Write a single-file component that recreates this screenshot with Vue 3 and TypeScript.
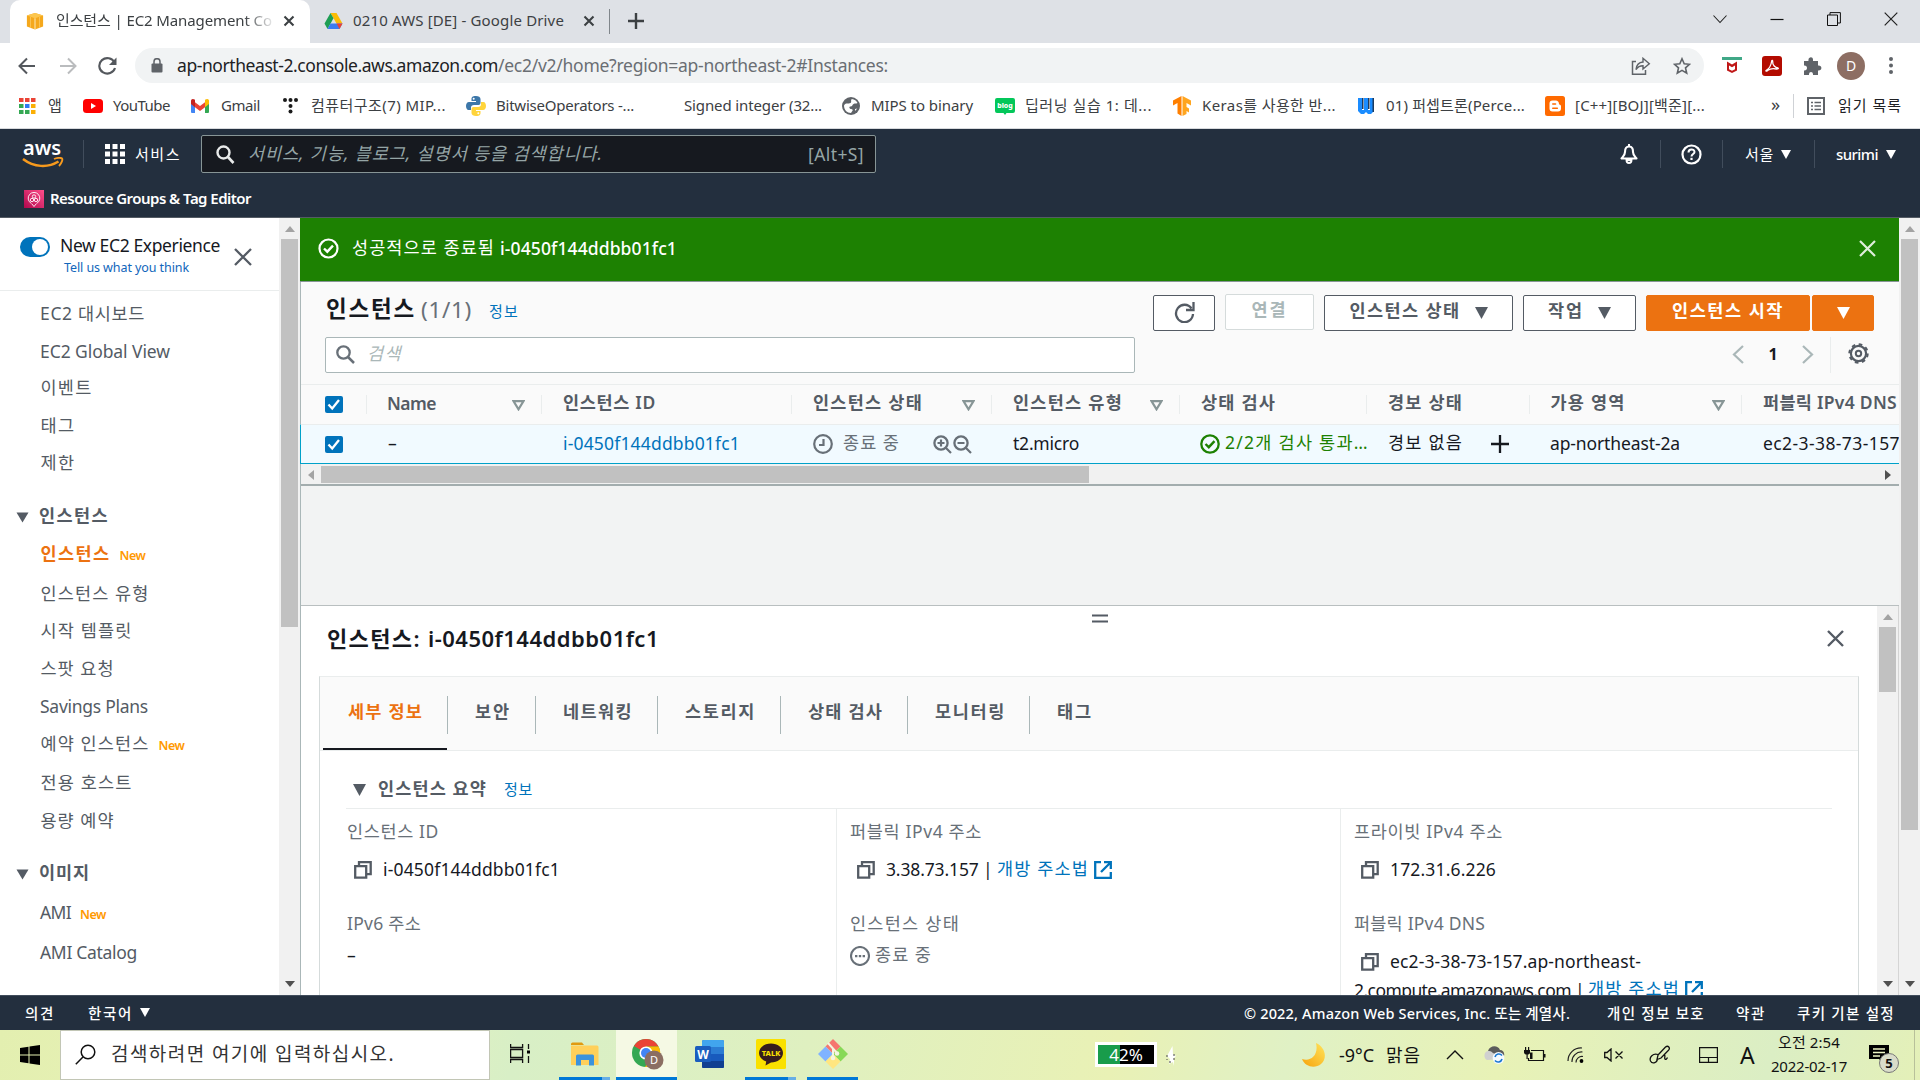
<script setup lang="ts">
import type { Directive } from 'vue'

// Adjusts the tracking of a single-line label so that it fills the given width.
const vFit: Directive<HTMLElement, number> = {
  mounted(el, { value }) {
    const count = (el.textContent ?? '').length
    const natural = el.getBoundingClientRect().width
    if (count > 0) el.style.letterSpacing = `${(value - natural) / count}px`
  },
}

interface Bookmark { icon: string; label: string; fit: number; slot: number }
const bookmarks: Bookmark[] = [
  { icon: 'apps', label: '앱', fit: 14, slot: 64 },
  { icon: 'youtube', label: 'YouTube', fit: 57, slot: 108 },
  { icon: 'gmail', label: 'Gmail', fit: 39, slot: 90 },
  { icon: 'tistory', label: '컴퓨터구조(7) MIP...', fit: 135, slot: 185 },
  { icon: 'python', label: 'BitwiseOperators -...', fit: 138, slot: 188 },
  { icon: 'none', label: 'Signed integer (32...', fit: 138, slot: 187 },
  { icon: 'globe', label: 'MIPS to binary', fit: 102, slot: 154 },
  { icon: 'blog', label: '딥러닝 실습 1: 데...', fit: 127, slot: 177 },
  { icon: 'tf', label: 'Keras를 사용한 반...', fit: 134, slot: 184 },
  { icon: 'wiki', label: '01) 퍼셉트론(Perce...', fit: 139, slot: 189 },
  { icon: 'blogger', label: '[C++][BOJ][백준][...', fit: 130, slot: 226 },
]

interface NavItem { label: string; fit: number; gap: number; kind?: 'head' | 'active'; isNew?: boolean; ko?: boolean }
const navItems: NavItem[] = [
  { label: 'EC2 대시보드', fit: 105, gap: 10 },
  { label: 'EC2 Global View', fit: 130, gap: 14 },
  { label: '이벤트', fit: 52, gap: 12, ko: true },
  { label: '태그', fit: 35, gap: 14, ko: true },
  { label: '제한', fit: 35, gap: 13, ko: true },
  { label: '인스턴스', fit: 70, gap: 29, kind: 'head', ko: true },
  { label: '인스턴스', fit: 70, gap: 14, kind: 'active', isNew: true, ko: true },
  { label: '인스턴스 유형', fit: 109, gap: 16, ko: true },
  { label: '시작 템플릿', fit: 92, gap: 13, ko: true },
  { label: '스팟 요청', fit: 74, gap: 14, ko: true },
  { label: 'Savings Plans', fit: 108, gap: 14 },
  { label: '예약 인스턴스', fit: 109, gap: 13, isNew: true, ko: true },
  { label: '전용 호스트', fit: 92, gap: 15, ko: true },
  { label: '용량 예약', fit: 74, gap: 14, ko: true },
  { label: '이미지', fit: 51, gap: 28, kind: 'head', ko: true },
  { label: 'AMI', fit: 31, gap: 16, isNew: true },
  { label: 'AMI Catalog', fit: 97, gap: 16 },
]

interface Column { label: string; fit: number; sortable: boolean }
const columns: Column[] = [
  { label: 'Name', fit: 49, sortable: true },
  { label: '인스턴스 ID', fit: 93, sortable: false },
  { label: '인스턴스 상태', fit: 110, sortable: true },
  { label: '인스턴스 유형', fit: 110, sortable: true },
  { label: '상태 검사', fit: 75, sortable: false },
  { label: '경보 상태', fit: 75, sortable: false },
  { label: '가용 영역', fit: 75, sortable: true },
  { label: '퍼블릭 IPv4 DNS', fit: 134, sortable: false },
]

const tabs = [
  { label: '세부 정보', fit: 75, slot: 128 },
  { label: '보안', fit: 36, slot: 88 },
  { label: '네트워킹', fit: 70, slot: 122 },
  { label: '스토리지', fit: 71, slot: 123 },
  { label: '상태 검사', fit: 75, slot: 127 },
  { label: '모니터링', fit: 71, slot: 122 },
  { label: '태그', fit: 36, slot: 100 },
]
</script>

<template>
  <div class="screen">
    <header class="tabstrip">
      <div class="tab active">
        <svg width="18" height="18" viewBox="0 0 20 20"><path d="M1 4 10 1l9 3v12l-9 3.500L1 16z" fill="#f5a81c"/><path d="M1 4 10 1l9 3-9 3z" fill="#fcc64e"/><path d="M10 7v12.500" stroke="#fff0cc" stroke-width="1"/><path d="M5 5.500v12.200M15 5.500v12.200" stroke="#fbc55a"/></svg>
        <span class="fade"><span v-fit="225" class="t">인스턴스 | EC2 Management Con</span></span>
        <svg class="x" width="12" height="12" viewBox="0 0 12 12"><path d="M1.500 1.500l9 9m0-9l-9 9" stroke="#3c4043" stroke-width="2.100"/></svg>
      </div>
      <div class="tab second">
        <svg width="19" height="18" viewBox="0 0 19 18"><path d="M6.500 1h6l6 10.500h-6z" fill="#fbbc04"/><path d="M6.500 1 .5 11.500l3 5.500L9.500 6.200z" fill="#1e9e54"/><path d="M3.500 17l3-5.500h12l-3 5.500z" fill="#3b7bf1"/><path d="M15.500 17l-3-5.500h6z" fill="#ea4335"/></svg>
        <span v-fit="211" class="t">0210 AWS [DE] - Google Drive</span>
        <svg class="x" width="12" height="12" viewBox="0 0 12 12"><path d="M1.500 1.500l9 9m0-9l-9 9" stroke="#3c4043" stroke-width="2.100"/></svg>
      </div>
      <i class="tab-sep"></i>
      <svg class="plus" width="16" height="16" viewBox="0 0 16 16"><path d="M8 0v16M0 8h16" stroke="#3c4043" stroke-width="2.400"/></svg>
      <div class="winctl">
        <svg width="14" height="14" viewBox="0 0 14 14"><path d="M.5 3.500 7 10.500l6.500-7" fill="none" stroke="#222" stroke-width="1.100"/></svg>
        <svg width="14" height="14" viewBox="0 0 14 14"><path d="M.5 7.500h13" stroke="#111" stroke-width="1.200"/></svg>
        <svg width="14" height="14" viewBox="0 0 14 14"><path d="M.5 3h10v10.500H.5zM3 3V.6h10.400V11H10.500" fill="none" stroke="#111"/></svg>
        <svg width="14" height="14" viewBox="0 0 14 14"><path d="M.7.700l12.600 12.600m0-12.600L.7 13.300" stroke="#222" stroke-width="1.200"/></svg>
      </div>
    </header>

    <div class="toolbar">
      <svg width="18" height="18" viewBox="0 0 18 18"><path d="M17 9H2M9 1.500 1.500 9 9 16.500" fill="none" stroke="#54585d" stroke-width="2"/></svg>
      <svg width="18" height="18" viewBox="0 0 18 18"><path d="M1 9h15M9 1.500 16.500 9 9 16.500" fill="none" stroke="#babcbe" stroke-width="2"/></svg>
      <svg width="20" height="18" viewBox="0 0 20 18"><path d="M16.500 5.500A8 7.700 0 1 0 17 11" fill="none" stroke="#54585d" stroke-width="2.100"/><path d="M18.500.500v7.500h-7.500z" fill="#54585d"/></svg>
      <div class="omnibox">
        <svg width="12" height="15" viewBox="0 0 12 15"><path d="M1.500 5.500h9q1 0 1 1v7q0 1-1 1h-9q-1 0-1-1v-7q0-1 1-1z" fill="#5f6368"/><path d="M3 6V3.700a3 3 0 0 1 6 0V6" fill="none" stroke="#5f6368" stroke-width="1.500"/></svg>
        <span class="url"><span v-fit="321" class="t dark">ap-northeast-2.console.aws.amazon.com</span><span v-fit="390" class="t">/ec2/v2/home?region=ap-northeast-2#Instances:</span></span>
        <svg width="20" height="18" viewBox="0 0 20 18"><path d="M5 4.500H1.500v12.700h13V13" fill="none" stroke="#5f6368" stroke-width="1.500"/><path d="M5 12.500C5.500 8 8 5.300 12 5V1.300l6.300 5.400L12 12V8.700c-3.200 0-5.300 1.200-7 3.800z" fill="none" stroke="#5f6368" stroke-width="1.400"/></svg>
        <svg width="18" height="18" viewBox="0 0 18 18"><path d="M9 1.800l2.200 5 5.300.5-4 3.600 1.200 5.300L9 13.400l-4.700 2.800 1.200-5.300-4-3.600 5.300-.5z" fill="none" stroke="#5f6368" stroke-width="1.600"/></svg>
      </div>
      <div class="exts">
        <svg width="20" height="20" viewBox="0 0 20 20"><path d="M0 1h20v3H0z" fill="#40a887"/><path d="M5 5.500l5 3 5-3v9L10 17l-5-2.500z" fill="#c01818"/><path d="M7 9.500l3 1.700 3-1.700v3.800l-3 1.500-3-1.500z" fill="#fff"/></svg>
        <svg width="20" height="20" viewBox="0 0 20 20"><rect width="20" height="20" rx="3" fill="#b30b00"/><path d="M4 14.500c3-1.500 5-4.500 5.700-9.500.300-1 1-.600 1 .4-.400 3.600 2.600 6.500 5.300 6.600 1 .500-.3 1.300-1.700 1-3-.800-6-.500-8.800 1.500-.8.900-1.700 1-1.500 0z" fill="none" stroke="#fff" stroke-width="1.300"/></svg>
        <svg width="20" height="20" viewBox="0 0 20 20"><path d="M2 5h4.500C5.700 1 10.800 0 11 3.500V5h5v4.500c4.500-.5 4.500 5.500 0 5V19h-5c.500-4-4.500-4-4 0H2v-4.500c4 .5 4-5.500 0-5z" fill="#5f6368"/></svg>
        <b class="avatar">D</b>
        <svg width="6" height="20" viewBox="0 0 6 20"><g fill="#5f6368"><circle cx="3" cy="3" r="2"/><circle cx="3" cy="9.500" r="2"/><circle cx="3" cy="16" r="2"/></g></svg>
      </div>
    </div>

    <div class="bookmarks">
      <div v-for="b in bookmarks" :key="b.label" class="bm" :style="{ width: b.slot + 'px' }">
        <svg width="20" height="20" viewBox="0 0 20 20">
          <g v-if="b.icon === 'apps'"><path d="M0 2h4.500v4H0zM6 2h4.500v4H6zM12 2h4.500v4H12z" fill="#ea4335"/><path d="M0 8h4.500v4H0zM0 14h4.500v4H0z" fill="#34a853"/><path d="M6 8h4.500v4H6z" fill="#2f7bf0"/><path d="M12 8h4.500v4H12zM12 14h4.500v4H12z" fill="#fbaf05"/><path d="M6 14h4.500v4H6z" fill="#34a853"/></g>
          <g v-else-if="b.icon === 'youtube'"><rect y="3" width="20" height="14" rx="3.500" fill="#f00"/><path d="M8 7l5 3-5 3z" fill="#fff"/></g>
          <g v-else-if="b.icon === 'gmail'"><path d="M0 4.500 4 7v10H1q-1 0-1-1z" fill="#4285f4"/><path d="M18 4.500 14 7v10h3q1 0 1-1z" fill="#34a853"/><path d="M4 6.200l5 3.900 5-3.900v5L9 15l-5-3.800z" fill="#ea4335"/><path d="M0 5c0-2.300 2-2.700 4-1.200v7.400L0 8z" fill="#c5221f"/><path d="M18 5c0-2.300-2-2.700-4-1.200v7.400L18 8z" fill="#fbbc04"/></g>
          <g v-else-if="b.icon === 'tistory'" fill="#1a1a1a"><circle cx="4" cy="4" r="2"/><circle cx="9.500" cy="4" r="2"/><circle cx="15" cy="4" r="2"/><circle cx="9.500" cy="10" r="2"/><circle cx="9.500" cy="15.500" r="2"/></g>
          <g v-else-if="b.icon === 'python'"><path d="M10 0C6 0 5.500 1.500 5.500 3v2H10v1H3C1 6 0 8 0 10s1 4 2.500 4H5v-2.500C5 10 6 9 8 9h4.500q2 0 2-2V3c0-2-2-3-4.500-3z" fill="#3c77a9"/><path d="M10 20c4 0 4.500-1.500 4.500-3v-2H10v-1h7c2 0 3-2 3-4s-1-4-2.500-4H15v2.500c0 1.500-1 2.500-3 2.500H7.500q-2 0-2 2v4c0 2 2 3 4.500 3z" fill="#ffd43b"/><circle cx="7.700" cy="2.800" r="1" fill="#fff"/><circle cx="12.300" cy="17.300" r="1" fill="#fff"/></g>
          <g v-else-if="b.icon === 'globe'"><circle cx="10" cy="10" r="9" fill="#5f6368"/><path d="M3 9.500C4.500 6 9 8.500 10 6.500c.6-1.300-.6-2.200.8-3.600 2.600.2 4.800 1.800 5.700 4.100-1.500 1-2.500 0-4 1s-1 2.500-3 2.500-1 2.500.5 2.500 2.500 1 1 2.500l-1 1.500C6 17 3 14 3 9.500zM14 13l2.300-.5-2.300 2.500z" fill="#fff"/></g>
          <g v-else-if="b.icon === 'blog'"><path d="M2 2h16q2 0 2 2v11q0 2-2 2h-6.500L10 19l-1.500-2H2q-2 0-2-2V4q0-2 2-2z" fill="#03c75a"/><text x="10" y="12" text-anchor="middle" font-family="Noto Sans" font-size="7" font-weight="800" fill="#fff">blog</text></g>
          <g v-else-if="b.icon === 'tf'"><path d="M9.500 0 1 4.500v5L5.500 7v10.500l4 2.500z" fill="#ff7f00"/><path d="M10.500 0 19 4.500v5L14.500 7v4l2.500 1.500v4l-2.500-1.500v3l-4 2z" fill="#ffa51f"/></g>
          <g v-else-if="b.icon === 'wiki'"><path d="M2 2h4v12h2V2h4v12h2V2h3v14l-2 2h-3l-2-2-2 2H5l-3-3z" fill="#1a8cff"/><path d="M6 2h1.500v11H6zM12 2h1.500v11H12zM16.500 2H18v14h-1.500z" fill="#1b3a5f"/></g>
          <g v-else-if="b.icon === 'blogger'"><rect width="20" height="20" rx="2.500" fill="#ff6a00"/><path d="M7.500 4.500h3.200c2 0 3.300 1.500 3.300 3.500 0 1 2 .500 2 2v2.500q0 3-3 3H7.500q-3 0-3-3v-5q0-3 3-3z" fill="#fff"/><path d="M7.800 8h2.700M7.800 12.200h4.500" stroke="#ff6a00" stroke-width="1.600" stroke-linecap="round"/></g>
        </svg>
        <span v-fit="b.fit" class="t">{{ b.label }}</span>
      </div>
      <span class="more">»</span>
      <i class="bm-sep"></i>
      <svg width="18" height="18" viewBox="0 0 18 18"><rect x="1" y="1" width="16" height="16" fill="none" stroke="#5f6368" stroke-width="2"/><path d="M4 5.500h2M4 9h2M4 12.500h2M7.500 5.500H14M7.500 9H14M7.500 12.500H14" stroke="#5f6368" stroke-width="1.600"/></svg>
      <span v-fit="64" class="t list">읽기 목록</span>
    </div>

    <nav class="awsnav">
      <div class="navrow">
        <div class="logo">
          <span v-fit="38" class="t">aws</span>
          <svg width="42" height="12" viewBox="0 0 42 12"><path d="M1 2c11 8.500 25 9 35.500 2.500" fill="none" stroke="#f79a1d" stroke-width="2.500"/><path d="M32 2c3-1.300 7-1.500 8-.500s-.500 5-3 7.500" fill="none" stroke="#f79a1d" stroke-width="1.900"/></svg>
        </div>
        <i class="vline"></i>
        <svg width="20" height="20" viewBox="0 0 20 20" fill="#fff"><path d="M0 0h5v5H0zM7.500 0h5v5h-5zM15 0h5v5h-5zM0 7.500h5v5H0zM7.500 7.500h5v5h-5zM15 7.500h5v5h-5zM0 15h5v5H0zM7.500 15h5v5h-5zM15 15h5v5h-5z"/></svg>
        <span v-fit="46" class="t lbl">서비스</span>
        <div class="search">
          <svg width="19" height="19" viewBox="0 0 19 19"><circle cx="7.500" cy="7.500" r="6" fill="none" stroke="#e8eaea" stroke-width="2.400"/><path d="M12 12l5.500 6" stroke="#e8eaea" stroke-width="2.600"/></svg>
          <em v-fit="355" class="t">서비스, 기능, 블로그, 설명서 등을 검색합니다.</em>
          <span v-fit="56" class="t alt">[Alt+S]</span>
        </div>
        <svg width="20" height="21" viewBox="0 0 20 21"><path d="M10 2.500c-3.500 0-4 3-4 5.500 0 3-1.500 4-3.500 6.500h15C15.500 12 14 11 14 8c0-2.500-.5-5.500-4-5.500z" fill="none" stroke="#fff" stroke-width="2.100" stroke-linejoin="round"/><path d="M7.500 16a2.500 3 0 0 0 5 0z" fill="none" stroke="#fff" stroke-width="1.900"/><path d="M10 0v3" stroke="#fff" stroke-width="2"/></svg>
        <i class="vline"></i>
        <svg width="21" height="21" viewBox="0 0 21 21"><circle cx="10.500" cy="10.500" r="9" fill="none" stroke="#fff" stroke-width="2.200"/><path d="M7.500 8.500c0-4 6-4 6-.5 0 2-3 2-3 4.500" fill="none" stroke="#fff" stroke-width="2"/><path d="M9.400 13.800h2.200V16H9.400z" fill="#fff"/></svg>
        <i class="vline"></i>
        <span v-fit="29" class="t lbl">서울</span>
        <svg width="10" height="9" viewBox="0 0 10 9"><path d="M0 0h10L5 9z" fill="#fff"/></svg>
        <i class="vline"></i>
        <span v-fit="42" class="t user">surimi</span>
        <svg width="10" height="9" viewBox="0 0 10 9"><path d="M0 0h10L5 9z" fill="#fff"/></svg>
      </div>
      <div class="favrow">
        <svg width="20" height="18" viewBox="0 0 20 18"><defs><linearGradient id="rg" x1="0" y1="1" x2="1" y2="0"><stop offset="0" stop-color="#b0084d"/><stop offset="1" stop-color="#ff4f8b"/></linearGradient></defs><rect width="20" height="18" fill="url(#rg)"/><path d="M7 13.200A5.800 5.800 0 1 1 13 13.200" fill="none" stroke="#fff" stroke-width=".9"/><g fill="none" stroke="#fff" stroke-width=".9"><circle cx="10" cy="6.500" r="1.700"/><circle cx="8" cy="10" r="1.700"/><circle cx="12" cy="10" r="1.700"/></g><path d="M7.500 13.500l2.500 3 2.500-3" fill="none" stroke="#fff" stroke-width=".9"/></svg>
        <span v-fit="201" class="t">Resource Groups &amp; Tag Editor</span>
      </div>
    </nav>

    <div class="body">
      <aside class="side">
        <div class="side-head">
          <span class="toggle"><i></i></span>
          <div class="exp">
            <span v-fit="160" class="t">New EC2 Experience</span>
            <a v-fit="125" class="t">Tell us what you think</a>
          </div>
          <svg width="18" height="18" viewBox="0 0 18 18"><path d="M1 1l16 16m0-16L1 17" stroke="#545b64" stroke-width="2.300"/></svg>
        </div>
        <ul class="side-list">
          <li v-for="(n, i) in navItems" :key="i" :class="[n.kind, { ko: n.ko }]" :style="{ marginTop: n.gap + 'px' }">
            <svg v-if="n.kind === 'head'" width="13" height="11" viewBox="0 0 13 11"><path d="M.5.500h12L6.500 10.500z" fill="#545b64"/></svg>
            <span v-fit="n.fit" class="t">{{ n.label }}</span>
            <b v-if="n.isNew" v-fit="26" class="t new">New</b>
          </li>
        </ul>
      </aside>
      <div class="vscroll side-scroll"><i class="up"></i><i class="thumb"></i><i class="down"></i></div>

      <main class="main">
        <div class="flash">
          <svg width="21" height="21" viewBox="0 0 21 21"><circle cx="10.500" cy="10.500" r="9" fill="none" stroke="#fff" stroke-width="2.200"/><path d="M6 10.500l3.300 3.200 5.700-6" fill="none" stroke="#fff" stroke-width="2.400"/></svg>
          <span v-fit="143" class="t ko">성공적으로 종료됨</span>
          <span v-fit="177" class="t med">i-0450f144ddbb01fc1</span>
          <svg class="end" width="17" height="17" viewBox="0 0 17 17"><path d="M1 1l15 15m0-15L1 16" stroke="#dfeedb" stroke-width="2.200"/></svg>
        </div>

        <section class="tablepanel">
          <div class="phead">
            <h1 v-fit="90" class="t">인스턴스</h1>
            <span v-fit="51" class="t count">(1/1)</span>
            <a v-fit="30" class="t info">정보</a>
            <div class="actions">
              <button class="btn refresh"><svg width="21" height="21" viewBox="0 0 21 21"><path d="M17.500 6.500A8.500 8.700 0 1 0 19 12" fill="none" stroke="#545b64" stroke-width="2.300"/><path d="M19.500 0v8h-7.500" fill="none" stroke="#545b64" stroke-width="2.300"/></svg></button>
              <button class="btn off"><span v-fit="36" class="t">연결</span></button>
              <button class="btn state"><span v-fit="111" class="t">인스턴스 상태</span><svg width="13" height="12" viewBox="0 0 13 12"><path d="M0 0h13L6.500 12z" fill="#545b64"/></svg></button>
              <button class="btn act"><span v-fit="36" class="t">작업</span><svg width="13" height="12" viewBox="0 0 13 12"><path d="M0 0h13L6.500 12z" fill="#545b64"/></svg></button>
              <button class="btn go"><span v-fit="112" class="t">인스턴스 시작</span></button>
              <button class="btn drop"><svg width="13" height="12" viewBox="0 0 13 12"><path d="M0 0h13L6.500 12z" fill="#fff"/></svg></button>
            </div>
          </div>
          <div class="filter">
            <div class="fbox">
              <svg width="19" height="19" viewBox="0 0 19 19"><circle cx="7.500" cy="7.500" r="6.200" fill="none" stroke="#687078" stroke-width="2.300"/><path d="M12 12l6 6" stroke="#687078" stroke-width="2.500"/></svg>
              <em v-fit="35" class="t">검색</em>
            </div>
            <div class="pager">
              <svg width="12" height="19" viewBox="0 0 12 19"><path d="M11 1 2 9.500 11 18" fill="none" stroke="#aab7b8" stroke-width="2.200"/></svg>
              <b>1</b>
              <svg width="12" height="19" viewBox="0 0 12 19"><path d="M1 1l9 8.500L1 18" fill="none" stroke="#aab7b8" stroke-width="2.200"/></svg>
            </div>
            <div class="gear"><svg width="21" height="21" viewBox="0 0 21 21"><circle cx="10.500" cy="10.500" r="7.600" fill="none" stroke="#545b64" stroke-width="2.200"/><circle cx="10.500" cy="10.500" r="9.200" fill="none" stroke="#545b64" stroke-width="2" stroke-dasharray="3.600 3.620"/><circle cx="10.500" cy="10.500" r="2.700" fill="none" stroke="#545b64" stroke-width="2"/></svg></div>
          </div>
          <div class="thead grid">
            <span class="check"><svg width="18" height="17" viewBox="0 0 18 17"><rect width="18" height="17" rx="2" fill="#0073bb"/><path d="M3.500 8.500l3.700 4L14 4" fill="none" stroke="#fff" stroke-width="2.300"/></svg></span>
            <div v-for="c in columns" :key="c.label" class="th">
              <b v-fit="c.fit" class="t" :class="{ ko: c.label !== 'Name' }">{{ c.label }}</b>
              <svg v-if="c.sortable" width="13" height="11" viewBox="0 0 13 11"><path d="M1.500 1.200h10L6.500 9.300z" fill="none" stroke="#879596" stroke-width="2.200"/></svg>
            </div>
          </div>
          <div class="trow grid">
            <span class="check"><svg width="18" height="17" viewBox="0 0 18 17"><rect width="18" height="17" rx="2" fill="#0073bb"/><path d="M3.500 8.500l3.700 4L14 4" fill="none" stroke="#fff" stroke-width="2.300"/></svg></span>
            <div class="td"><span class="t">–</span></div>
            <div class="td"><a v-fit="177" class="t">i-0450f144ddbb01fc1</a></div>
            <div class="td gray">
              <svg width="20" height="20" viewBox="0 0 20 20"><circle cx="10" cy="10" r="8.800" fill="none" stroke="#687078" stroke-width="2.200"/><path d="M10.500 5v6H6" fill="none" stroke="#687078" stroke-width="2.200"/></svg>
              <span v-fit="57" class="t ko pend">종료 중</span>
              <svg width="20" height="19" viewBox="0 0 20 19"><circle cx="8" cy="8" r="6.600" fill="none" stroke="#687078" stroke-width="2.300"/><path d="M13 13l5 5M8 4.500v7M4.500 8h7" stroke="#687078" stroke-width="2.200"/></svg>
              <svg width="20" height="19" viewBox="0 0 20 19"><circle cx="8" cy="8" r="6.600" fill="none" stroke="#687078" stroke-width="2.300"/><path d="M13 13l5 5M4.500 8h7" stroke="#687078" stroke-width="2.200"/></svg>
            </div>
            <div class="td"><span v-fit="66" class="t">t2.micro</span></div>
            <div class="td green">
              <svg width="20" height="20" viewBox="0 0 20 20"><circle cx="10" cy="10" r="8.700" fill="none" stroke="#1d8102" stroke-width="2.300"/><path d="M5.500 10l3.300 3.200 5.700-6" fill="none" stroke="#1d8102" stroke-width="2.400"/></svg>
              <span v-fit="144" class="t ko">2/2개 검사 통과…</span>
            </div>
            <div class="td"><span v-fit="75" class="t ko">경보 없음</span><svg class="add" width="18" height="18" viewBox="0 0 18 18"><path d="M9 0v18M0 9h18" stroke="#16191f" stroke-width="2.300"/></svg></div>
            <div class="td zone"><span v-fit="130" class="t">ap-northeast-2a</span></div>
            <div class="td"><span v-fit="137" class="t">ec2-3-38-73-157</span></div>
          </div>
          <div class="hscroll"><i class="left"></i><i class="hthumb"></i><i class="right"></i></div>
        </section>

        <section class="split">
          <div class="split-main">
            <svg class="handle" width="16" height="9" viewBox="0 0 16 9"><path d="M0 1.500h16M0 7.500h16" stroke="#545b64" stroke-width="2.200"/></svg>
            <div class="title">
              <h2><span v-fit="101" class="t">인스턴스: </span><span v-fit="231" class="t">i-0450f144ddbb01fc1</span></h2>
              <svg width="17" height="17" viewBox="0 0 17 17"><path d="M1 1l15 15m0-15L1 16" stroke="#545b64" stroke-width="2.400"/></svg>
            </div>
            <div class="card">
              <div class="tabs">
                <div v-for="(t, i) in tabs" :key="t.label" class="dtab" :class="{ on: i === 0 }" :style="{ width: t.slot + 'px' }">
                  <b v-fit="t.fit" class="t">{{ t.label }}</b>
                </div>
              </div>
              <div class="sum-head">
                <svg width="13" height="12" viewBox="0 0 13 12"><path d="M0 0h13L6.500 12z" fill="#545b64"/></svg>
                <b v-fit="109" class="t">인스턴스 요약</b>
                <a v-fit="29" class="t info">정보</a>
              </div>
              <div class="sum">
                <div class="col">
                  <label v-fit="92" class="t">인스턴스 ID</label>
                  <p class="val"><svg class="copy" viewBox="0 0 18 18"><path d="M1.200 5.200h11v11.500h-11zM5 5V1.200h11.700v12H12.500" fill="none" stroke="#545b64" stroke-width="2.300"/></svg><span v-fit="177" class="t">i-0450f144ddbb01fc1</span></p>
                  <label v-fit="74" class="t">IPv6 주소</label>
                  <p class="val2"><span class="t">–</span></p>
                </div>
                <div class="col">
                  <label v-fit="132" class="t">퍼블릭 IPv4 주소</label>
                  <p class="val"><svg class="copy" viewBox="0 0 18 18"><path d="M1.200 5.200h11v11.500h-11zM5 5V1.200h11.700v12H12.500" fill="none" stroke="#545b64" stroke-width="2.300"/></svg><span v-fit="111" class="t">3.38.73.157 |&nbsp;</span><a v-fit="92" class="t ko">개방 주소법</a><svg class="ext" viewBox="0 0 18 18"><path d="M7 1.200H1.200v15.600h15.600V11M10 1.200h6.800V8M16.500 1.500 7 11" fill="none" stroke="#0073bb" stroke-width="2.300"/></svg></p>
                  <label v-fit="110" class="t">인스턴스 상태</label>
                  <p class="val2 gray"><svg width="20" height="20" viewBox="0 0 20 20"><circle cx="10" cy="10" r="9" fill="none" stroke="#687078" stroke-width="2.100"/><path d="M5 9h2.400v2.200H5zM8.800 9h2.400v2.200H8.800zM12.600 9H15v2.200h-2.400z" fill="#687078"/></svg><span v-fit="57" class="t ko">종료 중</span></p>
                </div>
                <div class="col">
                  <label v-fit="149" class="t">프라이빗 IPv4 주소</label>
                  <p class="val"><svg class="copy" viewBox="0 0 18 18"><path d="M1.200 5.200h11v11.500h-11zM5 5V1.200h11.700v12H12.500" fill="none" stroke="#545b64" stroke-width="2.300"/></svg><span v-fit="106" class="t">172.31.6.226</span></p>
                  <label v-fit="131" class="t">퍼블릭 IPv4 DNS</label>
                  <p class="val dns"><svg class="copy" viewBox="0 0 18 18"><path d="M1.200 5.200h11v11.500h-11zM5 5V1.200h11.700v12H12.500" fill="none" stroke="#545b64" stroke-width="2.300"/></svg><span v-fit="251" class="t">ec2-3-38-73-157.ap-northeast-</span></p>
                  <p class="cont"><span v-fit="234" class="t">2.compute.amazonaws.com |&nbsp;</span><a v-fit="92" class="t ko">개방 주소법</a><svg class="ext" viewBox="0 0 18 18"><path d="M7 1.200H1.200v15.600h15.600V11M10 1.200h6.800V8M16.500 1.500 7 11" fill="none" stroke="#0073bb" stroke-width="2.300"/></svg></p>
                </div>
              </div>
            </div>
          </div>
          <div class="vscroll split-scroll"><i class="up"></i><i class="thumb"></i><i class="down"></i></div>
        </section>
      </main>
      <div class="vscroll page-scroll"><i class="up"></i><i class="thumb"></i><i class="down"></i></div>
    </div>

    <footer class="foot">
      <span v-fit="30" class="t">의견</span>
      <span v-fit="45" class="t">한국어</span>
      <svg width="10" height="9" viewBox="0 0 10 9"><path d="M0 0h10L5 9z" fill="#fff"/></svg>
      <span v-fit="326" class="t">© 2022, Amazon Web Services, Inc. 또는 계열사.</span>
      <span v-fit="98" class="t">개인 정보 보호</span>
      <span v-fit="30" class="t">약관</span>
      <span v-fit="98" class="t">쿠키 기본 설정</span>
    </footer>

    <div class="taskbar">
      <div class="start"><svg width="20" height="20" viewBox="0 0 20 20"><path d="M0 3l8.500-1.200v7.700H0zM9.500 1.600 20 0v9.500H9.500zM0 10.500h8.500v7.700L0 17zM9.500 10.500H20V20L9.500 18.400z"/></svg></div>
      <div class="wsearch">
        <svg width="21" height="21" viewBox="0 0 21 21"><circle cx="13" cy="8" r="6.800" fill="none" stroke="#111" stroke-width="1.500"/><path d="M8.200 12.800.8 20.200" stroke="#111" stroke-width="1.500"/></svg>
        <span v-fit="284" class="t">검색하려면 여기에 입력하십시오.</span>
      </div>
      <div class="apps">
        <div class="app"><svg width="21" height="19" viewBox="0 0 21 19"><path d="M.6 0v3.500h12V0M.6 19v-3.500h12V19M.6 5.500h12v8H.6zM18.500 0v5M18.500 12v7" fill="none" stroke="#111" stroke-width="1.300"/><path d="M17 6.500h3v3h-3z"/></svg></div>
        <div class="app run more-run"><svg width="28" height="24" viewBox="0 0 28 24"><path d="M0 2q0-1.500 1.500-1.500H11L13 3H0z" fill="#e09a10"/><path d="M0 3.500h26q1.500 0 1.500 1.500v18H0z" fill="#ffd05a"/><path d="M5 23.500V14q0-1.500 1.500-1.500h15Q23 12.500 23 14v9.500h-5V18h-8v5.500z" fill="#3c93dc"/></svg></div>
        <div class="app run focus">
          <svg width="32" height="32" viewBox="0 0 32 32"><circle cx="14" cy="15" r="14" fill="#34a853"/><path d="M14 15 2 8A14 14 0 0 1 26.500 8.500H14z" fill="#ea4335"/><path d="M14 8.500h12.600A14 14 0 0 1 13 29l7-11z" fill="#fbbc04"/><circle cx="14" cy="15" r="6.600" fill="#fff"/><circle cx="14" cy="15" r="5" fill="#4285f4"/><circle cx="22" cy="22" r="9.500" fill="#8b6e63"/><text x="22" y="26" text-anchor="middle" font-family="Noto Sans" font-size="11" fill="#fff">D</text></svg>
        </div>
        <div class="app word"><svg width="30" height="28" viewBox="0 0 30 28"><rect x="7" y="0" width="22" height="28" rx="1.500" fill="#185abd"/><path d="M7 1.500Q7 0 8.500 0h19Q29 0 29 1.500V7H7z" fill="#41a5ee"/><path d="M7 7h22v7H7z" fill="#2b7cd3"/><path d="M7 21h22v5.500q0 1.500-1.500 1.500h-19Q7 28 7 26.500z" fill="#103f91"/><rect y="6" width="16" height="16" rx="1.500" fill="#1a5dbe"/><text x="8" y="18.500" text-anchor="middle" font-family="Noto Sans" font-size="12" font-weight="700" fill="#fff">W</text></svg></div>
        <div class="app run more-run"><svg width="30" height="30" viewBox="0 0 30 30"><rect width="30" height="30" rx="1.500" fill="#fae100"/><path d="M15 4.500c6.500 0 12 4 12 9.500s-5.500 9.500-12 9.500l-5.500 3 .7-3.900C6 21 3 18 3 14c0-5.500 5.500-9.500 12-9.500z" fill="#371d1e"/><text x="15" y="16.700" text-anchor="middle" font-family="Noto Sans" font-size="7.500" font-weight="800" fill="#fae100">TALK</text></svg></div>
        <div class="app run"><svg width="30" height="30" viewBox="0 0 30 30"><path d="M15 0l7.500 7.500L15 15 7.500 7.500z" fill="#f5766f"/><path d="M7.500 7.500 15 15l-7.500 7.500L0 15z" fill="#80b3ff"/><path d="M22.500 7.500 30 15l-7.500 7.500L15 15z" fill="#87d957"/><path d="M15 15l7.500 7.500L15 30l-7.500-7.500z" fill="#ffe680"/><path d="M10 4l9 10M15 10v10" fill="none" stroke="#f3f6e0" stroke-width="2"/><circle cx="15" cy="19" r="2.300" fill="#f3f6e0"/><circle cx="19" cy="14.500" r="2.300" fill="#f3f6e0"/></svg></div>
      </div>
      <div class="batt"><span>42%</span></div>
      <svg class="bolt" width="12" height="24" viewBox="0 0 12 24"><path d="M6.500 2 1 12l3 3-1 5 4-2 1 4V14l2-2-3-2z" fill="#fff"/><path d="M1 11v5M8 10v6M4 17v3" stroke="#444" stroke-dasharray="2 2"/></svg>
      <div class="tray">
        <svg width="24" height="26" viewBox="0 0 24 26"><defs><linearGradient id="moon" x1="1" y1="0" x2="0" y2="1"><stop offset="0" stop-color="#ffe45c"/><stop offset="1" stop-color="#f7a30c"/></linearGradient></defs><path d="M14 1c9 4 12 15 5 21C13 27 3 25 0 17c8 3 17-3 14-16z" fill="url(#moon)"/></svg>
        <span v-fit="35" class="t">-9°C</span>
        <span v-fit="35" class="t">맑음</span>
        <svg width="18" height="10" viewBox="0 0 18 10"><path d="M1 9l8-8 8 8" fill="none" stroke="#111" stroke-width="1.400"/></svg>
        <svg width="22" height="18" viewBox="0 0 22 18"><path d="M4 5C6-1 14-1 16 4c3 0 5 3 4 6l-6 2z" fill="#5c5c5c"/><path d="M3 14c-4-2-3-8.500 1-9 3-.5 4 1 5 2l10 6z" fill="#d0d0d0"/><circle cx="14.500" cy="12" r="5.900" fill="#f5faff"/><path d="M11 11a4 4 0 0 1 7-1.500M18 13a4 4 0 0 1-7 1.500" fill="none" stroke="#1976d2" stroke-width="1.600"/></svg>
        <svg width="22" height="16" viewBox="0 0 22 16"><path d="M7 3.500h12.500v10H4.500V11" fill="none" stroke="#111" stroke-width="1.200"/><path d="M6 5.500h2.500V12H6zM20 7h1.500v3.500H20zM0 3h6v2.500q0 2-3 2T0 5.500zM1 0h1.200v3H1zM4 0h1.200v3H4zM2.500 7h1.200v5H2.500z" fill="#111"/></svg>
        <svg width="18" height="16" viewBox="0 0 18 16"><path d="M1 14A13 13 0 0 1 15 1M5 15A9.500 9.500 0 0 1 15.500 5M9 15.500A6 6 0 0 1 16 9.500" fill="none" stroke="#222" stroke-width="1.200"/><circle cx="14.500" cy="14" r="1.900"/></svg>
        <svg width="20" height="14" viewBox="0 0 20 14"><path d="M.7 4.500H3L7 1v12L3 9.500H.7zM11.500 3.500l7 7m0-7l-7 7" fill="none" stroke="#111" stroke-width="1.300"/></svg>
        <svg width="22" height="20" viewBox="0 0 22 20"><path d="M9 10 16.500 2q2-1.600 3.300 0t-.3 3.200L12 13l-4 1.500zM9 9.500C4 8 0 12 1.500 16c2 3.500 7 1.500 7-2.500M15 9c2 1 0 4 1 5s2-.5 2.500-1.500" fill="none" stroke="#111" stroke-width="1.300"/></svg>
        <svg width="19" height="16" viewBox="0 0 19 16"><path d="M.6.600h17.800v14.800H.6zM.6 10.500h17.800M9.500 10.500v5" fill="none" stroke="#111" stroke-width="1.200"/></svg>
        <span class="ime">A</span>
        <div class="clock"><span v-fit="62" class="t">오전 2:54</span><span v-fit="76" class="t">2022-02-17</span></div>
        <div class="note"><svg width="20" height="18" viewBox="0 0 20 18"><path d="M0 0h20v14h-6v4l-4-4H0z"/><path d="M4 4h12M4 7.500h12M4 11h7" stroke="#eef5c5" stroke-width="1.300"/></svg><b>5</b></div>
        <i class="desk"></i>
      </div>
    </div>
  </div>
</template>

<style>
body { margin: 0; overflow: hidden; }
</style>

<style scoped>
* { box-sizing: border-box; }
svg { display: block; flex: none; }
i { display: block; }
h1, h2, p, ul { margin: 0; padding: 0; }
.screen { width: 1920px; height: 1080px; overflow: hidden; display: flex; flex-direction: column; background: #fff; font: 17.5px/24px "Noto Sans", "Noto Sans CJK KR", sans-serif; color: #16191f; }
.screen > * { flex: none; }
.t { display: block; width: max-content; flex: none; white-space: pre; }
a { color: #0073bb; }

.tabstrip { height: 43px; background: #dee1e6; display: flex; align-items: center; padding-left: 10px; font-size: 15px; color: #3c4043; }
.tab { height: 43px; display: flex; align-items: center; padding-bottom: 1px; }
.tab .t { padding-bottom: 3px; }
.tab.active { width: 300px; background: #fff; border-radius: 10px 10px 0 0; padding-left: 16px; }
.fade { width: 217px; margin: 0 10px 0 12px; overflow: hidden; -webkit-mask-image: linear-gradient(90deg, #000 188px, transparent 220px); mask-image: linear-gradient(90deg, #000 188px, transparent 220px); }
.tab.second { width: 299px; padding-left: 14px; }
.tab.second .t { margin: 0 19px 0 10px; }
.tab-sep { width: 1px; height: 25px; background: #80868b; }
.plus { margin-left: 18px; margin-bottom: 1px; }
.winctl { margin-left: auto; display: flex; gap: 43px; margin-right: 22px; margin-bottom: 6px; }

.toolbar { height: 43px; display: flex; align-items: center; padding: 2px 0 0 18px; }
.toolbar > svg:nth-child(2) { margin-left: 23px; }
.toolbar > svg:nth-child(3) { margin-left: 21px; }
.omnibox { width: 1569px; height: 35px; border-radius: 18px; background: #f1f3f4; margin-left: 17px; display: flex; align-items: center; padding-left: 16px; }
.url { display: flex; width: 1468px; padding-left: 14px; color: #6a6e73; padding-bottom: 1px; }
.url .dark { color: #202124; }
.omnibox > svg:last-child { margin-left: 22px; }
.exts { display: grid; grid-template-columns: 40px 40px 35px 51px 10px; align-items: center; margin-left: 18px; }
.avatar { width: 28px; height: 28px; border-radius: 50%; background: #8d6e63; color: #fff; font-size: 14px; font-weight: 400; line-height: 28px; text-align: center; }

.bookmarks { height: 43px; border-bottom: 1px solid #d8dadd; display: flex; align-items: center; padding: 0 0 2px 19px; font-size: 15px; color: #3c4043; }
.bookmarks .t { padding-bottom: 2px; }
.bm { display: flex; align-items: center; gap: 10px; flex: none; }
.bm:first-child { gap: 9px; }
.more { width: 22px; font-size: 18px; line-height: 18px; padding-bottom: 5px; }
.bm-sep { width: 1px; height: 24px; background: #cfd2d6; margin-right: 13px; }
.list { margin-left: 13px; color: #202124; }

.awsnav { height: 89px; background: #232f3e; border-bottom: 1px solid #545b64; color: #fff; font-size: 15px; }
.navrow { height: 51px; display: grid; align-items: center; padding-left: 22px; grid-template-columns: 61px 22px 30px 66px 1418px 41px 21px 41px 23px 36px 33px 22px 50px 12px; padding-bottom: 1px; font-weight: 500; }
.logo .t { font-size: 20px; font-weight: 600; line-height: 16px; margin: 0 0 1px 1px; }
.vline { width: 1px; height: 28px; background: #414d5c; }
.navrow .lbl { font-weight: 400; padding-bottom: 1px; }
.search { width: 675px; height: 38px; background: #16191f; border: 1px solid #879596; border-radius: 2px; display: flex; align-items: center; padding: 0 11px 0 14px; font-size: 17.500px; font-weight: 400; color: #95a5a6; }
.search em { margin-left: 13px; padding-bottom: 2px; }
.search .alt { margin-left: auto; padding-bottom: 1px; }
.favrow { display: flex; align-items: center; gap: 6px; padding: 6px 0 0 24px; font-weight: 600; }
.favrow .t { padding-bottom: 2px; }
.favrow { height: 32px; }

.body { height: 777px; display: flex; overflow: hidden; }
.side { width: 279px; height: 777px; background: #fff; overflow: hidden; }
.side-head { height: 73px; border-bottom: 1px solid #eaeded; display: flex; padding-left: 20px; }
.toggle { width: 30px; height: 20px; border-radius: 10px; background: #0073bb; margin-top: 19px; padding: 2px 2px 2px 12px; }
.toggle i { width: 16px; height: 16px; border-radius: 50%; background: #fff; }
.exp { width: 173px; padding: 15px 0 0 10px; }
.exp a { font-size: 12.500px; line-height: 18px; margin: 2px 0 0 4px; color: #1166bb; }
.side-head > svg { margin: 30px 0 0 11px; }
.side-list { list-style: none; color: #545b64; }
.side-list li { height: 24px; padding-left: 40px; display: flex; align-items: center; line-height: 24px; }
.side-list li.ko { padding-left: 40.500px; }
.side-list li.head { padding-left: 16px; font-weight: 600; }
.side-list li.head svg { margin: 4px 10px 0 0; }
.side-list li.active { color: #ec7211; font-weight: 600; }
.new { color: #ff9900; font-size: 12.500px; margin: 5px 0 0 9px; font-weight: 600; }

.vscroll { background: #f1f1f1; display: flex; flex-direction: column; align-items: center; justify-content: flex-start; flex: none; }
.up, .down { border: 5px solid transparent; height: 0; width: 0; flex: none; }
.up { border-top: 0; border-bottom: 6px solid #a3a3a3; margin: 8px 0 7px; }
.down { border-bottom: 0; border-top: 6px solid #505050; margin: auto 0 8px; }
.thumb { width: 17px; background: #c1c1c1; }
.side-scroll { width: 21px; }
.side-scroll .thumb { height: 388px; }
.page-scroll { width: 21px; }
.page-scroll .thumb { height: 591px; }

.main { width: 1599px; background: #f2f3f3; display: flex; flex-direction: column; border-left: 1px solid #aab7b8; }
.flash { height: 64px; background: #1d8102; border-bottom: 1px solid #879596; margin-left: -1px; display: flex; align-items: center; padding: 0 23px 2px 18px; color: #fff; }
.flash .ko { margin-left: 13px; padding-bottom: 3px; }
.flash .med { margin-left: 5px; font-weight: 500; padding-bottom: 2px; }
.flash .end { margin-left: auto; }

.tablepanel { height: 204px; background: #fafafa; border-bottom: 2px solid #a3adae; }
.phead { height: 54px; display: flex; align-items: center; padding: 7px 25px 0 25px; }
h1 { font-size: 22.500px; font-weight: 600; padding-bottom: 7px; }
.count { font-size: 22.500px; color: #687078; margin-left: 5px; padding-bottom: 6px; }
.info { font-size: 15px; margin-left: 17px; }
.phead .info { padding-bottom: 3px; }
.actions { display: flex; margin-left: auto; }
.btn { height: 36px; border: 1px solid #545b64; border-radius: 2px; background: #fff; color: #545b64; font: 600 17.500px/22px "Noto Sans", "Noto Sans CJK KR", sans-serif; padding: 0; margin: 0 0 0 10px; display: flex; align-items: center; justify-content: center; gap: 14px; }
.btn .t { padding-bottom: 5px; }
.refresh { width: 62px; }
.off { width: 89px; border-color: #d5dbdb; color: #aab7b8; margin-top: -1px; }
.state { width: 189px; }
.act { width: 113px; }
.go { width: 164px; background: #ec7211; border-color: #ec7211; color: #fff; }
.drop { width: 62px; background: #ec7211; border-color: #ec7211; margin-left: 2px; }
.filter { height: 48px; display: flex; padding: 1px 0 0 24px; }
.fbox { width: 810px; height: 36px; border: 1px solid #aab7b8; border-radius: 2px; background: #fff; display: flex; align-items: center; padding: 0 0 1px 10px; }
.fbox em { color: #aab7b8; margin-left: 12px; padding-bottom: 4px; }
.pager { width: 695px; display: flex; align-items: center; height: 36px; padding: 0 0 2px 597px; font-size: 16px; }
.pager b { width: 58px; text-align: center; color: #16191f; }
.gear { height: 36px; border-left: 1px solid #eaeded; padding: 6px 0 0 17px; }
.grid { display: grid; grid-template-columns: 65px 175px 250px 200px 188px 187px 163px 212px 158px; align-items: center; overflow: hidden; }
.check { padding-left: 24px; }
.thead { height: 40px; border-top: 1px solid #eaeded; color: #545b64; }
.th { border-left: 1px solid #eaeded; height: 19px; display: flex; align-items: center; justify-content: space-between; padding: 0 16px 0 21px; font-weight: 600; }
.th:nth-child(2) { padding-left: 20px; }
.th b { font-weight: 600; padding-bottom: 3px; }
.th .ko { padding-bottom: 6px; }
.th svg { margin-top: 1px; }
.th:nth-child(8), .zone { padding-left: 20.500px; }
.trow { height: 40px; background: #f1faff; border: 1px solid #00a1c9; border-top-color: #eaeded; border-right: 0; margin-left: -1px; }
.td { padding-left: 22px; display: flex; align-items: center; white-space: nowrap; }
.td .t { padding-bottom: 2px; }
.td .ko { padding-bottom: 4px; }
.td.zone { padding-left: 21px; }
.gray { color: #687078; }
.pend { margin: 0 33px 0 10px; }
.green { color: #1d8102; gap: 5px; padding-left: 21px; }
.add { margin-left: 28px; }
.hscroll { height: 20px; background: #f1f1f1; display: flex; align-items: center; padding: 1px 8px 0 7px; }
.left, .right { border: 5px solid transparent; width: 0; height: 0; }
.left { border-left: 0; border-right: 6px solid #a3a3a3; }
.right { border-right: 0; border-left: 6px solid #505050; margin-left: auto; }
.hthumb { width: 768px; height: 17px; background: #c1c1c1; margin-left: 7px; }

.split { margin-top: 119px; height: 390px; border-top: 1px solid #b9bfc0; background: #fff; display: flex; overflow: hidden; }
.split-main { width: 1576px; padding-left: 18px; }
.split-scroll { width: 22px; border-right: 1px solid #d5d5d5; }
.split-scroll .thumb { height: 65px; }
.handle { margin: 8px auto 0; transform: translateX(2px); }
.title { display: flex; justify-content: space-between; padding: 2px 33px 0 8px; height: 53px; align-items: flex-start; }
h2 { font-size: 22px; font-weight: 600; line-height: 26px; display: flex; }
.title svg { margin-top: 5px; }
.card { width: 1540px; height: 330px; border: 1px solid #d5dbdb; border-top-color: #eaeded; }
.tabs { height: 74px; background: #fafafa; border-bottom: 1px solid #eaeded; display: flex; align-items: flex-start; }
.dtab { height: 38px; margin-top: 19px; border-right: 1px solid #aab7b8; padding: 3px 0 0 27px; color: #545b64; font-size: 17.500px; }
.dtab:last-child { border-right: 0; }
.dtab b, .sum-head b { font-weight: 600; }
.dtab.on { color: #ec7211; padding-left: 28px; }
.dtab.on::after { content: ""; display: block; width: 124px; height: 2px; background: #16191f; margin: 25px 0 0 -25px; }
.sum-head { margin: 0 26px; height: 58px; border-bottom: 1px solid #eaeded; display: flex; align-items: center; padding: 18px 0 0 7px; color: #545b64; }
.sum-head svg { margin-top: 2px; }
.sum-head b { margin-left: 12px; padding-bottom: 2px; }
.sum { display: flex; padding-left: 26px; }
.col { width: 504px; height: 300px; padding: 10px 0 0 13px; border-left: 1px solid #eaeded; }
.col:first-child { width: 490px; padding-left: 1px; border-left: 0; }
.col label { color: #687078; }
.val { display: flex; align-items: center; height: 24px; margin: 15px 0 29px 7px; }
.val .t { padding-bottom: 2px; }
.copy { width: 18px; height: 18px; margin-right: 11px; }
.val .ko, .cont .ko { padding-bottom: 5px; }
.ext { width: 18px; height: 18px; margin-left: 5px; }
.val2 { display: flex; align-items: center; gap: 5px; height: 24px; margin-top: 9px; }
.val2 .t { padding-bottom: 2px; }
.val2 .ko { padding-bottom: 4px; }
.val.dns { margin: 15px 0 4px 7px; }
.cont { display: flex; align-items: center; height: 24px; }
.cont .t { padding-bottom: 1px; }
.cont .ko { padding-bottom: 4px; }

.foot { height: 35px; background: #232f3e; border-top: 1px solid #414d5c; color: #fff; font-size: 14.500px; font-weight: 500; display: grid; align-items: center; padding: 0 0 1px 25px; grid-template-columns: 63px 52px 1104px 363px 129px 61px 100px; }

.taskbar { height: 50px; display: flex; background: linear-gradient(105deg, #e3efb0 0, #e9f2b8 15%, #d8efc6 27%, #dff0c0 42%, #e9f1b5 58%, #e0f1c5 67%, #e8f2b6 78%, #dbeec4 92%, #e4f0b8 100%); color: #111; }
.start { width: 60px; padding: 15px 0 0 20px; }
.wsearch { width: 430px; border: 1px solid #c2c6b5; background: #fff; display: flex; align-items: center; padding: 0 0 1px 14px; font-size: 19px; color: #333; }
.wsearch .t { margin-left: 15px; padding-bottom: 2px; }
.apps { display: flex; align-items: flex-start; width: 605px; }
.app { width: 62px; height: 50px; display: flex; align-items: center; justify-content: center; border-bottom: 3px solid transparent; }
.app:first-child { width: 63px; margin: 0 1px 0 0; padding: 0 3px 0 0; }
.app.run { width: 51px; margin: 0 6px 0 5px; border-bottom-color: #0078d7; }
.more-run { border-image: linear-gradient(90deg, #0078d7 41px, #66aee6 41px) 3; border-style: solid; border-width: 0 0 3px; }
.app.focus { width: 61px; margin: 0 1px 0 0; background: #f5f9e4; padding-left: 2px; }
.word { padding-left: 2px; }
.batt { width: 62px; height: 25px; margin-top: 12px; border: 3px solid #fff; background: linear-gradient(90deg, #189c4b 40%, #000 40%); color: #fff; font-size: 17px; line-height: 19px; text-align: center; }
.bolt { margin: 14px 0 0 9px; }
.tray { display: grid; grid-template-columns: 37px 47px 60px 38px 40px 43px 37px 45px 50px 41px 31px 98px 45px 6px; align-items: center; padding-left: 124px; }
.tray > .t { font-size: 18px; }
.ime { font-size: 23px; }
.clock { width: 76px; font-size: 15px; display: flex; flex-direction: column; align-items: center; padding-bottom: 2px; }
.note { position: relative; padding-bottom: 3px; }
.note b { position: absolute; left: 10px; top: 8px; width: 20px; height: 20px; border-radius: 50%; border: 1px solid #777; background: #d9dcc9; font-size: 13px; line-height: 18px; text-align: center; }
.desk { width: 1px; height: 50px; background: #b8c09a; }
</style>
